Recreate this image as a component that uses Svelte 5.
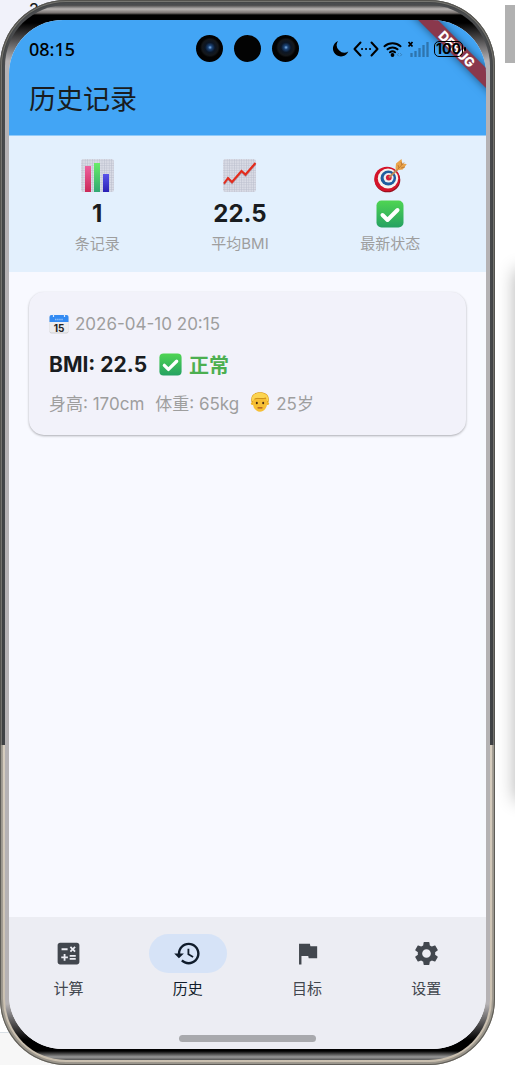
<script lang="ts">
  interface HistoryRecord {
    date: string;
    bmi: number;
    status: string;
    height: number;
    weight: number;
    age: number;
  }

  const records: HistoryRecord[] = [
    { date: '2026-04-10 20:15', bmi: 22.5, status: '正常', height: 170, weight: 65, age: 25 }
  ];

  const average = $derived(
    (records.reduce((sum, r) => sum + r.bmi, 0) / records.length).toFixed(1)
  );

  const tabs = [
    {
      label: '计算',
      path: 'M19 3H5c-1.1 0-2 .9-2 2v14c0 1.1.9 2 2 2h14c1.1 0 2-.9 2-2V5c0-1.1-.9-2-2-2zm-5.97 4.06L14.09 6l1.41 1.41L16.91 6l1.06 1.06-1.41 1.41 1.41 1.41-1.06 1.06-1.41-1.4-1.41 1.41-1.06-1.06 1.41-1.41-1.41-1.42zm-6.78.66h5v1.5h-5v-1.5zM11.5 16h-2v2H8v-2H6v-1.5h2v-2h1.5v2h2V16zm6.5 1.25h-5v-1.5h5v1.5zm0-2.5h-5v-1.5h5v1.5z'
    },
    {
      label: '历史',
      path: 'M13 3c-4.97 0-9 4.03-9 9H1l3.89 3.89.07.14L9 12H6c0-3.87 3.13-7 7-7s7 3.13 7 7-3.13 7-7 7c-1.93 0-3.68-.79-4.94-2.06l-1.42 1.42C8.27 19.99 10.51 21 13 21c4.97 0 9-4.03 9-9s-4.03-9-9-9zm-1 5v5l4.28 2.54.72-1.21-3.5-2.08V8H12z'
    },
    {
      label: '目标',
      path: 'M14.4 6L14 4H5v17h2v-7h5.6l.4 2h7V6z'
    },
    {
      label: '设置',
      path: 'M19.14 12.94c.04-.3.06-.61.06-.94 0-.32-.02-.64-.07-.94l2.03-1.58c.18-.14.23-.41.12-.61l-1.92-3.32c-.12-.22-.37-.29-.59-.22l-2.39.96c-.5-.38-1.03-.7-1.62-.94l-.36-2.54c-.04-.24-.24-.41-.48-.41h-3.84c-.24 0-.43.17-.47.41l-.36 2.54c-.59.24-1.13.57-1.62.94l-2.39-.96c-.22-.08-.47 0-.59.22L2.74 8.87c-.12.21-.08.47.12.61l2.03 1.58c-.05.3-.09.63-.09.94s.02.64.07.94l-2.03 1.58c-.18.14-.23.41-.12.61l1.92 3.32c.12.22.37.29.59.22l2.39-.96c.5.38 1.03.7 1.62.94l.36 2.54c.05.24.24.41.48.41h3.84c.24 0 .44-.17.47-.41l.36-2.54c.59-.24 1.13-.56 1.62-.94l2.39.96c.22.08.47 0 .59-.22l1.92-3.32c.12-.22.07-.47-.12-.61l-2.01-1.58zM12 15.6c-1.98 0-3.6-1.62-3.6-3.6s1.62-3.6 3.6-3.6 3.6 1.62 3.6 3.6-1.62 3.6-3.6 3.6z'
    }
  ];

  let active = $state('历史');
</script>

{#snippet check(size: number)}
  <svg width={size} height={size} viewBox="0 0 28 28" aria-hidden="true">
    <defs>
      <linearGradient id="check-{size}" x1="0" y1="0" x2="0" y2="1">
        <stop offset="0" stop-color="#4fd552" />
        <stop offset="1" stop-color="#25a162" />
      </linearGradient>
    </defs>
    <rect x="0.5" y="0.5" width="27" height="27" rx="5" fill="url(#check-{size})" />
    <path d="M6.5 15l5 5L21.5 10" fill="none" stroke="#fff" stroke-width="4" stroke-linecap="round" stroke-linejoin="round" />
  </svg>
{/snippet}

{#snippet paper(id: string)}
  <defs>
    <pattern id="grid-{id}" width="2.4" height="2.4" patternUnits="userSpaceOnUse">
      <rect width="2.4" height="2.4" fill="#dadce6" />
      <path d="M0 0H2.4M0 0V2.4" stroke="#b9bccb" stroke-width="0.9" />
    </pattern>
  </defs>
  <rect x="1" y="1" width="33" height="33" rx="2.5" fill="url(#grid-{id})" />
{/snippet}

<div class="desktop">
  <div class="backdrop" aria-hidden="true">
    <span class="behind">2</span>
    <span class="block"></span>
    <span class="panel"></span>
    <span class="footer-strip"></span>
  </div>

  <div class="phone">
    <div class="rim">
      <div class="screen">
        <header>
          <div class="status-bar">
            <time>08:15</time>
            <div class="cameras" aria-hidden="true">
              <span class="camera lens"></span>
              <span class="camera"></span>
              <span class="camera lens"></span>
            </div>
            <div class="indicators">
              <svg width="17" height="18" viewBox="0 0 17 18" aria-hidden="true">
                <path d="M6 1A8 8 0 1 0 16.300 11.600A7.600 7.600 0 0 1 6 1z" />
              </svg>
              <svg width="26" height="16" viewBox="0 0 26 16" fill="none" stroke="#000" stroke-width="2" stroke-linecap="round" stroke-linejoin="round" aria-hidden="true">
                <path d="M7.5 1.5L1.5 8l6 6.5M18.5 1.5l6 6.5-6 6.5M9 8h.1M13 8h.1M17 8h.1" />
              </svg>
              <svg width="20" height="16" viewBox="0 0 20 16" fill="none" stroke="#000" stroke-width="2" stroke-linecap="round" aria-hidden="true">
                <path d="M1.5 5.3a12 12 0 0 1 16 0M4.5 8.3a7.5 7.5 0 0 1 10 0M7 11.300a4 4 0 0 1 5 0" />
                <circle cx="9.5" cy="14" r="1.2" fill="#000" stroke-width="1.4" />
                <path d="M15.5 12.5l-1.200 1.200 1.200 1.200M17.500 12.500l1.200 1.200-1.200 1.200" stroke="#357eb9" stroke-width="1" />
              </svg>
              <svg width="23" height="16" viewBox="0 0 23 16" aria-hidden="true">
                <path d="M1.5 1l4 4.5M5.5 1l-4 4.5" stroke="#000" stroke-width="1.8" />
                <path d="M4.500 16v-4M8.500 16v-6M12.500 16V7M16.500 16V4M20.500 16V1" stroke="#2e74ad" stroke-width="2.300" />
              </svg>
              <span class="battery">100</span>
            </div>
          </div>
          <h1>历史记录</h1>
        </header>

        <section class="stats">
          <div class="stat">
            <svg width="35" height="35" viewBox="0 0 35 35" aria-hidden="true">
              {@render paper('bars')}
              <defs>
                <linearGradient id="pink" x1="0" y1="0" x2="0" y2="1">
                  <stop offset="0" stop-color="#ee609d" /><stop offset="1" stop-color="#cb2958" />
                </linearGradient>
                <linearGradient id="green" x1="0" y1="0" x2="0" y2="1">
                  <stop offset="0" stop-color="#68ed68" /><stop offset="1" stop-color="#31a874" />
                </linearGradient>
                <linearGradient id="blue" x1="0" y1="0" x2="0" y2="1">
                  <stop offset="0" stop-color="#5854ea" /><stop offset="1" stop-color="#2b20b5" />
                </linearGradient>
              </defs>
              <rect x="5" y="8" width="6" height="26" fill="url(#pink)" />
              <rect x="14" y="5" width="6" height="29" fill="url(#green)" />
              <rect x="23" y="16" width="6" height="18" fill="url(#blue)" />
            </svg>
            <strong>{records.length}</strong>
            <span class="caption">条记录</span>
          </div>
          <div class="stat">
            <svg width="35" height="35" viewBox="0 0 35 35" aria-hidden="true">
              {@render paper('trend')}
              <path d="M2 26.5L6 21l4 4 9.500-11 4 3.500L33.500 6" fill="none" stroke="#8f3340" stroke-width="2" opacity="0.4" />
              <path d="M2 25.500L6 20l4 4 9.500-11 4 3.500L33.500 5" fill="none" stroke="#e42b1b" stroke-width="2" />
            </svg>
            <strong>{average}</strong>
            <span class="caption">平均BMI</span>
          </div>
          <div class="stat">
            <svg width="35" height="35" viewBox="0 0 35 35" aria-hidden="true">
              <ellipse cx="14.500" cy="22" rx="12.800" ry="12.300" fill="#910d1a" />
              <ellipse cx="14" cy="21" rx="12.800" ry="12.300" fill="#d3142a" />
              <ellipse cx="15" cy="20.500" rx="10.200" ry="10" fill="#f4f3ef" />
              <ellipse cx="15.300" cy="20" rx="7.800" ry="7.600" fill="#1f5e9f" />
              <ellipse cx="15.600" cy="19.800" rx="5" ry="4.800" fill="#eef0f2" />
              <circle cx="15.800" cy="19.600" r="2.900" fill="#d3213a" />
              <path d="M16 19.500L29 7" stroke="#b98a5a" stroke-width="2" />
              <path d="M22.500 10.500l.5-5L28.500 1l.8 4.500 4.500.6-4 5.400-5.800.8z" fill="#e9a44a" />
              <path d="M24.500 11.500L31 4.500M25 7l1 3M28 4l1 3M28 10l4-1" stroke="#b97230" stroke-width="0.800" fill="none" />
            </svg>
            <strong>{@render check(28)}</strong>
            <span class="caption">最新状态</span>
          </div>
        </section>

        <main>
          {#each records as record}
            <article class="card">
              <div class="row date">
                <svg width="20" height="20" viewBox="0 0 20 20" aria-hidden="true">
                  <rect x="0.5" y="1" width="19" height="18.5" rx="2" fill="#cfcfd2" />
                  <rect x="0.5" y="1" width="19" height="17.500" rx="2" fill="#ededee" />
                  <path d="M.5 8V3a2 2 0 0 1 2-2h15a2 2 0 0 1 2 2v5z" fill="#338bf3" />
                  <path d="M4.500 0v3M15.500 0v3" stroke="#dcebff" stroke-width="1.200" />
                  <path d="M6 5.500h8" stroke="#8bbdf8" stroke-width="1.500" stroke-dasharray="1.500 .6" />
                  <text x="10" y="17.500" text-anchor="middle" font-size="10" font-weight="700" fill="#222">15</text>
                </svg>
                <time>{record.date}</time>
              </div>
              <div class="row result">
                <strong>BMI: {record.bmi}</strong>
                <span class="verdict">{@render check(23)} {record.status}</span>
              </div>
              <div class="row details">
                <span>身高: {record.height}cm</span>
                <span>体重: {record.weight}kg</span>
                <span class="age">
                  <svg width="20" height="20" viewBox="0 0 20 20" aria-hidden="true">
                    <path d="M1.5 10C0 3.500 4 .3 10 .3S20 3.500 18.500 10l-2 2h-13z" fill="#d99818" />
                    <circle cx="2.5" cy="11.500" r="1.600" fill="#efb52a" />
                    <circle cx="17.5" cy="11.500" r="1.600" fill="#efb52a" />
                    <path d="M3 7h14v4.500c0 4.500-3 8.200-7 8.200s-7-3.700-7-8.200z" fill="#f6bf35" />
                    <path d="M2 9.500C.5 3.500 5 .8 10 .8c5.500 0 9.500 3 8 8.700-1-.5-1.500-2-2-3.500-3.500 1.500-8.500-.5-11.500 1C3.500 7.500 3 9 2 9.500z" fill="#fcd450" />
                    <path d="M4.500 7c3-1.500 8 .5 11.500-1" fill="none" stroke="#c98a16" stroke-width="0.900" />
                    <ellipse cx="6.800" cy="11" rx="1" ry="1.300" fill="#4b2d15" />
                    <ellipse cx="13.200" cy="11" rx="1" ry="1.300" fill="#4b2d15" />
                    <path d="M8 15.800h4" stroke="#a8501c" stroke-width="1.200" stroke-linecap="round" />
                  </svg>
                  {record.age}岁
                </span>
              </div>
            </article>
          {/each}
        </main>

        <nav>
          <div class="tabs">
            {#each tabs as tab}
              <button class:active={active === tab.label} onclick={() => (active = tab.label)}>
                <span class="pill">
                  <svg width="29" height="29" viewBox="0 0 24 24" fill="currentColor" aria-hidden="true">
                    <path d={tab.path} />
                  </svg>
                </span>
                {tab.label}
              </button>
            {/each}
          </div>
          <span class="gesture"></span>
        </nav>

        <span class="debug">DEBUG</span>
      </div>
    </div>
  </div>
</div>

<style>
  :global(body) {
    margin: 0;
    background: #fff;
  }

  .desktop {
    position: relative;
    box-sizing: border-box;
    display: flex;
    min-height: 100vh;
    padding: 0 20px 0 0;
    overflow: hidden;
    font-family: Inter, 'Noto Sans CJK SC', sans-serif;
    color: #191c20;
  }

  .backdrop {
    position: absolute;
    inset: 0;
    background: linear-gradient(90deg, #f1f2fa 100px, #fff 200px);
    background-size: 100% 200px;
    background-repeat: no-repeat;
  }

  .behind {
    position: absolute;
    left: 29px;
    top: 0;
    font-size: 16px;
    font-weight: 500;
    line-height: 18px;
  }

  .block {
    position: absolute;
    top: 5px;
    right: 0;
    width: 10px;
    height: 58px;
    background: #b1b1b1;
  }

  .panel {
    position: absolute;
    top: 270px;
    left: 100%;
    width: 40px;
    height: 530px;
    box-shadow: 0 0 18px rgba(0, 0, 0, 0.3);
  }

  .footer-strip {
    position: absolute;
    left: 0;
    bottom: 0;
    width: 200px;
    height: 32px;
    border-top: 1px solid #d9e0e6;
    background: #f7f7f7;
  }

  .phone {
    position: relative;
    flex: 1;
    display: flex;
    padding: 5px;
    border-radius: 66px;
    background: linear-gradient(#4a4c4e, #3f4245 70%, #d6cdbf 70%, #c9bfaf);
    box-shadow:
      inset 0 0 0 1px rgba(70, 68, 64, 0.7),
      inset 0 0 0 2px rgba(150, 148, 140, 0.6),
      inset 0 0 0 3px rgba(60, 60, 60, 0.3);
  }

  .rim {
    flex: 1;
    display: flex;
    padding: 15px 4px 11px;
    border-radius: 61px;
    background: linear-gradient(
      #444 0,
      #b8b4b2 4px,
      #77716f 8px,
      #000 10px,
      #000 18px,
      #b5b2b4 56px,
      #b5b2b4 calc(100% - 56px),
      #000 calc(100% - 20px),
      #000 calc(100% - 9px),
      #999 calc(100% - 3px),
      #555 100%
    );
  }

  .screen {
    position: relative;
    flex: 1;
    display: flex;
    flex-direction: column;
    min-width: 0;
    overflow: hidden;
    border-radius: 54px;
    background: #f8f9ff;
  }

  header {
    padding: 12px 20px 15px;
    border-bottom: 1px solid #90caf9;
    background: #42a5f5;
  }

  .status-bar {
    position: relative;
    z-index: 2;
    display: grid;
    grid-template-columns: 1fr auto 1fr;
    align-items: center;
    height: 33px;
    color: #000;
  }

  .status-bar time {
    font-family: 'Noto Sans', sans-serif;
    font-size: 18px;
    font-weight: 500;
  }

  .cameras {
    display: flex;
    gap: 11px;
  }

  .camera {
    width: 27px;
    height: 27px;
    border-radius: 50%;
    background: #030303;
  }

  .lens {
    background: radial-gradient(circle at 52% 46%, #7fb2e8 0, #1b4478 2px, #0b1626 5px, #15181b 8px, #020202 10px);
  }

  .indicators {
    display: flex;
    align-items: center;
    justify-content: flex-end;
    gap: 4px;
  }

  .indicators svg {
    flex-shrink: 0;
  }

  .battery {
    position: relative;
    margin-right: 3px;
    padding: 0 1px;
    border: 1px solid #000;
    border-radius: 5px;
    font-size: 14px;
    font-weight: 700;
    line-height: 14px;
  }

  .battery::after {
    content: '';
    position: absolute;
    top: 5px;
    right: -4px;
    width: 2px;
    height: 4px;
    border-radius: 1px;
    background: #000;
  }

  h1 {
    margin: 15px 0 0;
    font-size: 27px;
    font-weight: 400;
    line-height: 40px;
  }

  .stats {
    display: flex;
    justify-content: space-around;
    padding: 22px 20px 18px;
    background: #e3f0fd;
  }

  .stat {
    display: flex;
    flex-direction: column;
    align-items: center;
  }

  .stat strong {
    display: flex;
    align-items: center;
    height: 41px;
    font-size: 24px;
  }

  .caption {
    font-size: 15px;
    line-height: 20px;
    color: #9e9e9e;
  }

  main {
    flex: 1;
    padding: 20px;
  }

  .card {
    display: flex;
    flex-direction: column;
    gap: 14px;
    padding: 20px 20px 21px;
    border-radius: 15px;
    background: #f2f2fa;
    box-shadow:
      0 1px 3px rgba(0, 0, 0, 0.16),
      0 1px 2px rgba(0, 0, 0, 0.16);
  }

  .row {
    display: flex;
    align-items: center;
    height: 24px;
    font-size: 17px;
    color: #9e9e9e;
  }

  .date {
    gap: 6px;
  }

  .result {
    gap: 12px;
    height: 29px;
    margin-bottom: -3px;
    font-size: 21px;
    color: #191c20;
  }

  .verdict {
    display: flex;
    align-items: center;
    gap: 7px;
    font-size: 20px;
    font-weight: 700;
    color: #4caf50;
  }

  .details {
    gap: 11px;
  }

  .age {
    display: flex;
    align-items: center;
    gap: 6px;
  }

  nav {
    display: flex;
    flex-direction: column;
    align-items: center;
    gap: 36px;
    padding: 17px 0 7px;
    background: #ecedf3;
  }

  .tabs {
    display: flex;
    width: 100%;
  }

  button {
    flex: 1;
    display: flex;
    flex-direction: column;
    align-items: center;
    gap: 4px;
    padding: 0;
    border: 0;
    background: none;
    font: 400 15px/22px 'Noto Sans CJK SC', sans-serif;
    color: #42474e;
    cursor: pointer;
  }

  .pill {
    display: grid;
    place-items: center;
    width: 78px;
    height: 39px;
    border-radius: 20px;
  }

  .active {
    color: #101c2b;
  }

  .active .pill {
    background: #d6e3f7;
  }

  .gesture {
    width: 137px;
    height: 7px;
    border-radius: 4px;
    background: #a8a9ad;
  }

  .debug {
    position: absolute;
    top: 22px;
    right: -41px;
    width: 140px;
    transform: rotate(45deg);
    background: #8a384c;
    box-shadow: 0 0 8px rgba(0, 0, 0, 0.5);
    font-size: 13px;
    font-weight: 800;
    line-height: 14px;
    text-align: center;
    color: #fff;
  }
</style>
